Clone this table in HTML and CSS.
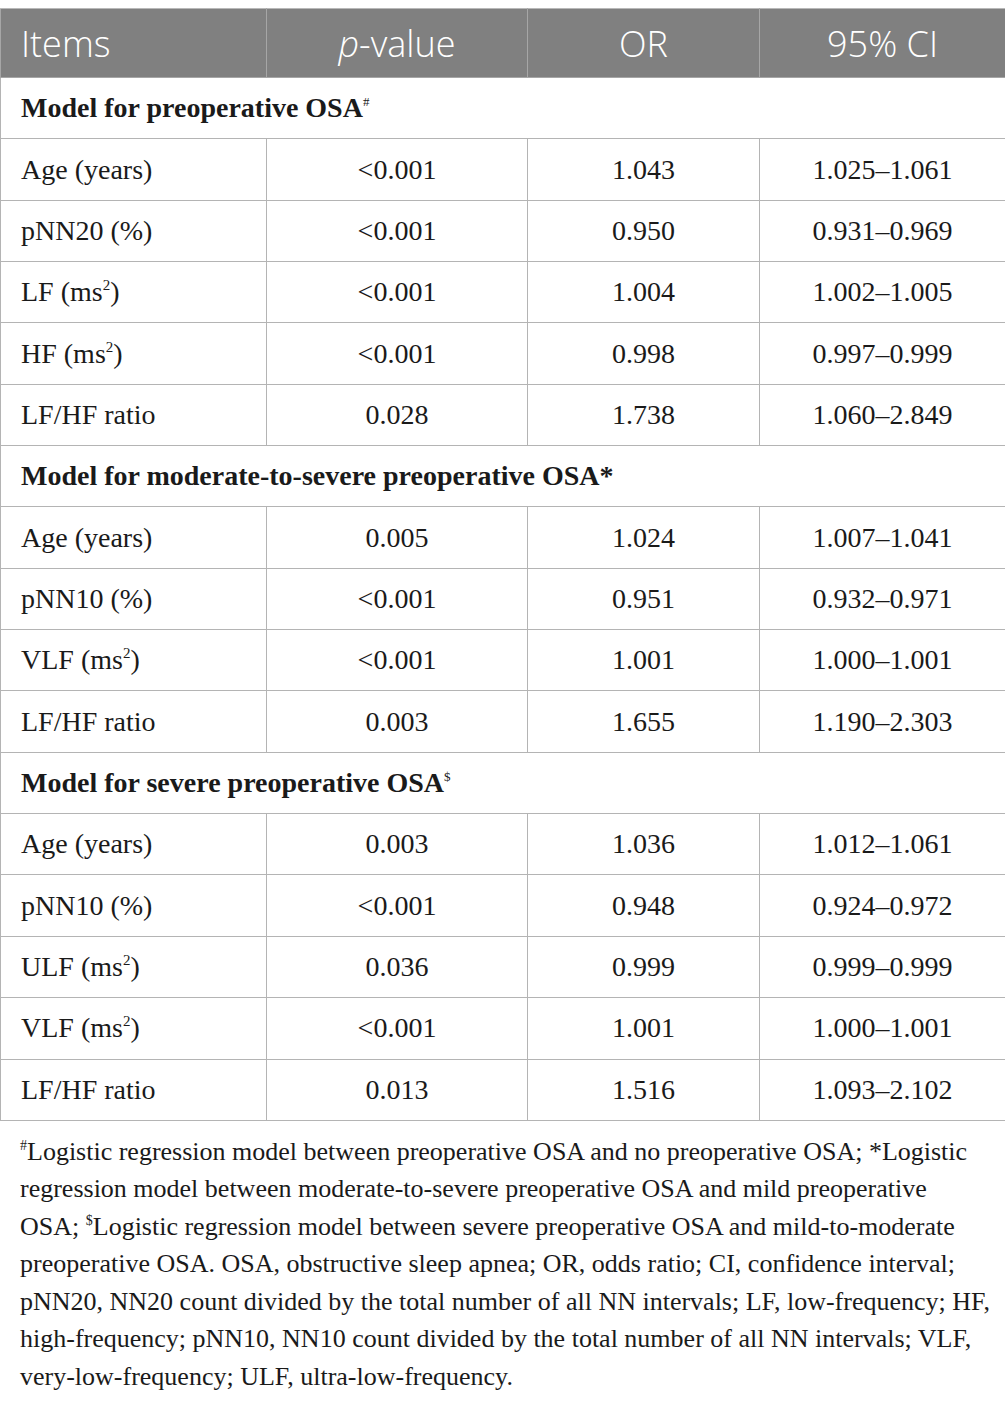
FILE: index.html
```html
<!DOCTYPE html>
<html>
<head>
<meta charset="utf-8">
<link rel="stylesheet" href="styles.css">
</head>
<body>
<table class="tbl">
  <colgroup>
    <col class="c1"><col class="c2"><col class="c3"><col class="c4">
  </colgroup>
  <thead>
    <tr><th class="left">Items</th><th><i>p</i>-value</th><th>OR</th><th>95% CI</th></tr>
  </thead>
  <tbody>
    <tr class="sec"><td colspan="4">Model for preoperative OSA<sup class="ssup">#</sup></td></tr>
    <tr><td class="left">Age (years)</td><td>&lt;0.001</td><td>1.043</td><td>1.025–1.061</td></tr>
    <tr><td class="left">pNN20 (%)</td><td>&lt;0.001</td><td>0.950</td><td>0.931–0.969</td></tr>
    <tr><td class="left">LF (ms<sup>2</sup>)</td><td>&lt;0.001</td><td>1.004</td><td>1.002–1.005</td></tr>
    <tr><td class="left">HF (ms<sup>2</sup>)</td><td>&lt;0.001</td><td>0.998</td><td>0.997–0.999</td></tr>
    <tr><td class="left">LF/HF ratio</td><td>0.028</td><td>1.738</td><td>1.060–2.849</td></tr>
    <tr class="sec"><td colspan="4">Model for moderate-to-severe preoperative OSA*</td></tr>
    <tr><td class="left">Age (years)</td><td>0.005</td><td>1.024</td><td>1.007–1.041</td></tr>
    <tr><td class="left">pNN10 (%)</td><td>&lt;0.001</td><td>0.951</td><td>0.932–0.971</td></tr>
    <tr><td class="left">VLF (ms<sup>2</sup>)</td><td>&lt;0.001</td><td>1.001</td><td>1.000–1.001</td></tr>
    <tr><td class="left">LF/HF ratio</td><td>0.003</td><td>1.655</td><td>1.190–2.303</td></tr>
    <tr class="sec"><td colspan="4">Model for severe preoperative OSA<sup class="ssup">$</sup></td></tr>
    <tr><td class="left">Age (years)</td><td>0.003</td><td>1.036</td><td>1.012–1.061</td></tr>
    <tr><td class="left">pNN10 (%)</td><td>&lt;0.001</td><td>0.948</td><td>0.924–0.972</td></tr>
    <tr><td class="left">ULF (ms<sup>2</sup>)</td><td>0.036</td><td>0.999</td><td>0.999–0.999</td></tr>
    <tr><td class="left">VLF (ms<sup>2</sup>)</td><td>&lt;0.001</td><td>1.001</td><td>1.000–1.001</td></tr>
    <tr><td class="left">LF/HF ratio</td><td>0.013</td><td>1.516</td><td>1.093–2.102</td></tr>
  </tbody>
</table>
<p class="note"><sup>#</sup>Logistic regression model between preoperative OSA and no preoperative OSA; *Logistic regression model between moderate-to-severe preoperative OSA and mild preoperative<br>OSA; <sup>$</sup>Logistic regression model between severe preoperative OSA and mild-to-moderate preoperative OSA. OSA, obstructive sleep apnea; OR, odds ratio; CI, confidence interval; pNN20, NN20 count divided by the total number of all NN intervals; LF, low-frequency; HF, high-frequency; pNN10, NN10 count divided by the total number of all NN intervals; VLF, very-low-frequency; ULF, ultra-low-frequency.</p>
</body>
</html>
```
FILE: styles.css
```css
html, body {
  margin: 0;
  padding: 0;
  background: #fff;
}
body {
  padding-top: 8px;
}
.tbl {
  width: 1005px;
  border-collapse: collapse;
  table-layout: fixed;
  font-family: "Liberation Serif", "Times New Roman", serif;
  font-size: 28px;
  color: #1a1a1a;
}
.c1 { width: 266px; }
.c2 { width: 261px; }
.c3 { width: 232px; }
.c4 { width: 246px; }
.tbl th {
  background: #808080;
  color: #fff;
  font-family: "Open Sans", "DejaVu Sans", sans-serif;
  font-weight: 300;
  font-size: 36px;
  height: 68px;
  padding: 0 20px;
  text-align: center;
  border: 1px solid #a6a6a6;
  border-top: 1px solid #b8b8b8;
}
.tbl th.left { text-align: left; }
.tbl td {
  height: 60.35px;
  padding: 0 20px;
  text-align: center;
  border: 1.5px solid #b4b4b4;
  vertical-align: middle;
}
.tbl td.left { text-align: left; }
.tbl tr.sec td {
  text-align: left;
  font-weight: bold;
}
.tbl sup {
  font-size: 15px;
  vertical-align: 11px;
  line-height: 0;
}
.tbl sup.ssup { font-size: 13px; font-weight: normal; }
.note {
  margin: 12px 0 0 0;
  padding: 0 0 0 20px;
  font-family: "Liberation Serif", "Times New Roman", serif;
  font-size: 26px;
  line-height: 37.5px;
  color: #1a1a1a;
}
.note sup {
  font-size: 14px;
  vertical-align: 10px;
  line-height: 0;
}
```
